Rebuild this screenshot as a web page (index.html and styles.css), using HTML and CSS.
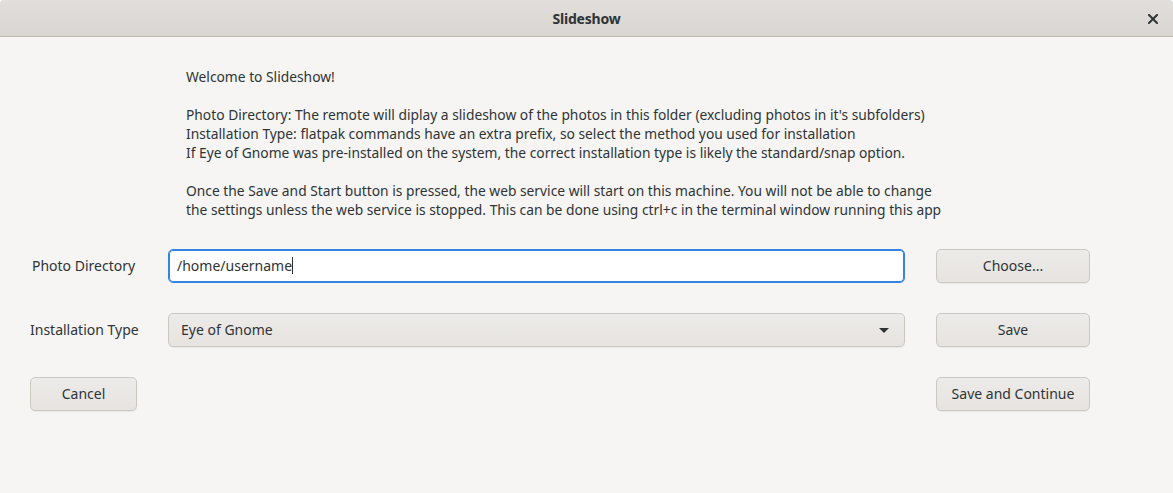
FILE: index.html
```html
<!DOCTYPE html>
<html>
<head>
<meta charset="utf-8">
<title>Slideshow</title>
<link rel="stylesheet" href="styles.css">
</head>
<body>
<div class="window">
  <header class="titlebar">
    <span class="title">Slideshow</span>
    <button class="close" aria-label="Close">
      <svg width="10" height="10" viewBox="0 0 10 10"><path d="M1 1 L9 9 M9 1 L1 9" stroke="#2e3436" stroke-width="2" stroke-linecap="square"/></svg>
    </button>
  </header>
  <main class="content">
    <div class="intro">
      <p>Welcome to Slideshow!</p>
      <p>Photo Directory: The remote will diplay a slideshow of the photos in this folder (excluding photos in it's subfolders)<br>Installation Type: flatpak commands have an extra prefix, so select the method you used for installation<br>If Eye of Gnome was pre-installed on the system, the correct installation type is likely the standard/snap option.</p>
      <p>Once the Save and Start button is pressed, the web service will start on this machine. You will not be able to change<br>the settings unless the web service is stopped. This can be done using ctrl+c in the terminal window running this app</p>
    </div>
    <div class="form">
      <label class="label">Photo Directory</label>
      <div class="entry"><span>/home/username</span><span class="caret"></span></div>
      <button class="btn">Choose...</button>

      <label class="label">Installation Type</label>
      <div class="combo"><span>Eye of Gnome</span><span class="arrow"></span></div>
      <button class="btn">Save</button>

      <button class="btn">Cancel</button>
      <span></span>
      <button class="btn">Save and Continue</button>
    </div>
  </main>
</div>
</body>
</html>
```

FILE: styles.css
```css
html, body {
  margin: 0;
  padding: 0;
  background: #ffffff;
}
body {
  font-family: "Noto Sans", "DejaVu Sans", sans-serif;
  font-size: 14px;
  color: #2e3436;
}
.window {
  width: 1173px;
  height: 493px;
  background: #f6f5f4;
  border-radius: 4px 4px 0 0;
  overflow: hidden;
  display: flex;
  flex-direction: column;
}
.titlebar {
  height: 36px;
  flex: none;
  background: linear-gradient(#e1dedb, #dad6d2);
  border-bottom: 1px solid #bfb8b1;
  display: flex;
  align-items: center;
  justify-content: center;
  position: relative;
}
.title {
  font-weight: bold;
  font-size: 14px;
  color: #2e3436;
  letter-spacing: -0.2px;
}
.close {
  position: absolute;
  right: 14px;
  top: 13px;
  width: 12px;
  height: 12px;
  padding: 0;
  border: 0;
  background: none;
  display: flex;
  align-items: center;
  justify-content: center;
}
.content {
  width: 1060px;
  padding: 30px 0 0 30px;
}
.intro {
  margin: 0 0 30px 156px;
  font-size: 13.8px;
}
.intro p {
  margin: 0 0 19px 0;
  line-height: 19px;
  white-space: nowrap;
}
.intro p:last-child { margin-bottom: 0; }
.form {
  display: grid;
  grid-template-columns: 107px 737px 154px;
  column-gap: 31px;
  row-gap: 30px;
  align-items: center;
}
.label {
  text-align: center;
  white-space: nowrap;
  padding-bottom: 2px;
}
.entry, .combo, .btn {
  height: 34px;
  box-sizing: border-box;
  border-radius: 5px;
  font-family: inherit;
  font-size: 14px;
  color: #2e3436;
  padding-bottom: 2px;
}
.entry {
  border: 1px solid #3584e4;
  background: #ffffff;
  display: flex;
  align-items: center;
  padding-left: 8px;
  box-shadow: inset 0 0 0 1px #3584e4;
}
.caret {
  width: 1px;
  height: 17px;
  background: #2e3436;
}
.combo {
  border: 1px solid #cdc7c2;
  background: linear-gradient(#edebe9, #e6e3e0);
  display: flex;
  align-items: center;
  justify-content: space-between;
  padding-left: 12px;
  padding-right: 15px;
  box-shadow: 0 1px 0 rgba(0,0,0,0.05);
}
.arrow {
  width: 0;
  height: 0;
  border-left: 5px solid transparent;
  border-right: 5px solid transparent;
  border-top: 5px solid #2e3436;
  margin-top: 2px;
}
.btn {
  border: 1px solid #cdc7c2;
  background: linear-gradient(#edebe9, #e6e3e0);
  padding-left: 10px;
  padding-right: 10px;
  text-align: center;
  white-space: nowrap;
  box-shadow: 0 1px 0 rgba(0,0,0,0.05);
}
```
